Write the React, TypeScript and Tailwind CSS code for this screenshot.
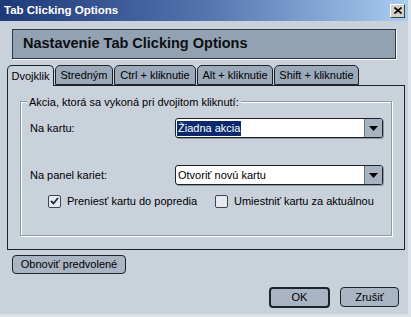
import React from 'react';

const tabs = [
  { label: 'Dvojklik', w: 'w-[47px]' },
  { label: 'Stredným', w: 'w-[58px]' },
  { label: 'Ctrl + kliknutie', w: 'w-[82px]' },
  { label: 'Alt + kliknutie', w: 'w-[76px]' },
  { label: 'Shift + kliknutie', w: 'w-[85px]' },
];

const Select: React.FC<{ value: string; selected?: boolean }> = ({ value, selected }) => (
  <div className="w-[208px] h-[20px] flex border border-[#1c2228] rounded-[3px] bg-white shadow-[1px_1px_0_#8b97a4] overflow-hidden">
    <div className="flex-1 flex items-center px-[1px]">
      <span className={`px-[1px] leading-[15px] ${selected ? 'bg-[#0b2a6e] text-white' : 'text-black'}`}>{value}</span>
    </div>
    <div className="w-[18px] flex items-center justify-center bg-[#a7b3c1] border-l border-[#6c7886]">
      <svg width="9" height="5" viewBox="0 0 9 5">
        <path d="M0 0h9L4.5 5z" fill="#000" />
      </svg>
    </div>
  </div>
);

const Checkbox: React.FC<{ checked?: boolean; label: string }> = ({ checked, label }) => (
  <div className="flex items-center gap-[6px]">
    <div className="w-[13px] h-[13px] border border-[#3c4650] rounded-[2px] bg-[#e6eaee] flex items-center justify-center">
      {checked && (
        <svg width="9" height="8" viewBox="0 0 9 8">
          <path d="M1 4l2.5 2.5L8 1" stroke="#1d2a38" strokeWidth="1.8" fill="none" />
        </svg>
      )}
    </div>
    <span>{label}</span>
  </div>
);

export default function App() {
  return (
    <div className="w-[411px] h-[317px] bg-[#c9d1db] text-[11px] text-black flex flex-col border-r-[3px] border-b-[3px] border-[#dde2e8] font-['Liberation_Sans',Arial,sans-serif]">
      {/* Title bar */}
      <div className="h-[21px] flex items-center justify-between pl-[4px] pr-[3px] bg-gradient-to-r from-[#1d3978] via-[#5573ad] to-[#a9cdf1]">
        <span className="text-white font-bold text-[11.5px]">Tab Clicking Options</span>
        <div className="w-[15px] h-[14px] bg-[#d4d0c8] border border-t-white border-l-white border-b-[#404040] border-r-[#404040] flex items-center justify-center">
          <svg width="8" height="7" viewBox="0 0 8 7">
            <path d="M0.5 0.5l7 6M7.5 0.5l-7 6" stroke="#000" strokeWidth="1.6" />
          </svg>
        </div>
      </div>

      {/* Header */}
      <div className="mx-[12px] mt-[8px] h-[30px] flex items-center pl-[10px] bg-[#93a2b2] border border-[#2f3842] shadow-[1px_1px_0_#ffffff] text-[14.5px] font-bold text-[#0b0f14]">
        Nastavenie Tab Clicking Options
      </div>

      {/* Tabs */}
      <div className="ml-[7px] mt-[6px] flex h-[20px] items-end">
        {tabs.map((t, i) => (
          <div
            key={t.label}
            className={`${t.w} h-[20px] mr-[1px] flex items-center justify-center border border-[#1c2228] rounded-t-[5px] ${
              i === 0 ? 'bg-[#c9d1db] border-b-0 relative z-10 h-[21px] -mb-[1px]' : 'bg-[#9ba9b8]'
            }`}
          >
            {t.label}
          </div>
        ))}
      </div>

      {/* Tab panel */}
      <div className="ml-[7px] w-[398px] h-[165px] border border-[#1c2228] pt-[15px] px-[12px]">
        <div className="relative h-[135px] border border-[#8c98a5] shadow-[inset_1px_1px_0_#ffffff,1px_1px_0_#ffffff] pt-[16px] pl-[9px] pr-[8px]">
          <span className="absolute -top-[8px] left-[6px] px-[2px] bg-[#c9d1db]">Akcia, ktorá sa vykoná pri dvojitom kliknutí:</span>
          <div className="flex items-center justify-between">
            <span>Na kartu:</span>
            <Select value="Žiadna akcia" selected />
          </div>
          <div className="flex items-center justify-between mt-[27px]">
            <span>Na panel kariet:</span>
            <Select value="Otvoriť novú kartu" />
          </div>
          <div className="flex mt-[8px] pl-[18px]">
            <div className="w-[167px]">
              <Checkbox checked label="Preniesť kartu do popredia" />
            </div>
            <Checkbox label="Umiestniť kartu za aktuálnou" />
          </div>
        </div>
      </div>

      {/* Reset */}
      <div className="ml-[12px] mt-[5px]">
        <button className="w-[114px] h-[19px] rounded-[4px] border border-[#1c2228] bg-[#a9b5c3]">Obnoviť predvolené</button>
      </div>

      {/* Dialog buttons */}
      <div className="flex justify-end gap-[10px] mr-[9px] mt-[13px]">
        <button className="w-[61px] h-[21px] rounded-[4px] border-2 border-[#1c2228] bg-[#a9b5c3]">OK</button>
        <button className="w-[59px] h-[20px] rounded-[4px] border border-[#1c2228] bg-[#a9b5c3]">Zrušiť</button>
      </div>
    </div>
  );
}
